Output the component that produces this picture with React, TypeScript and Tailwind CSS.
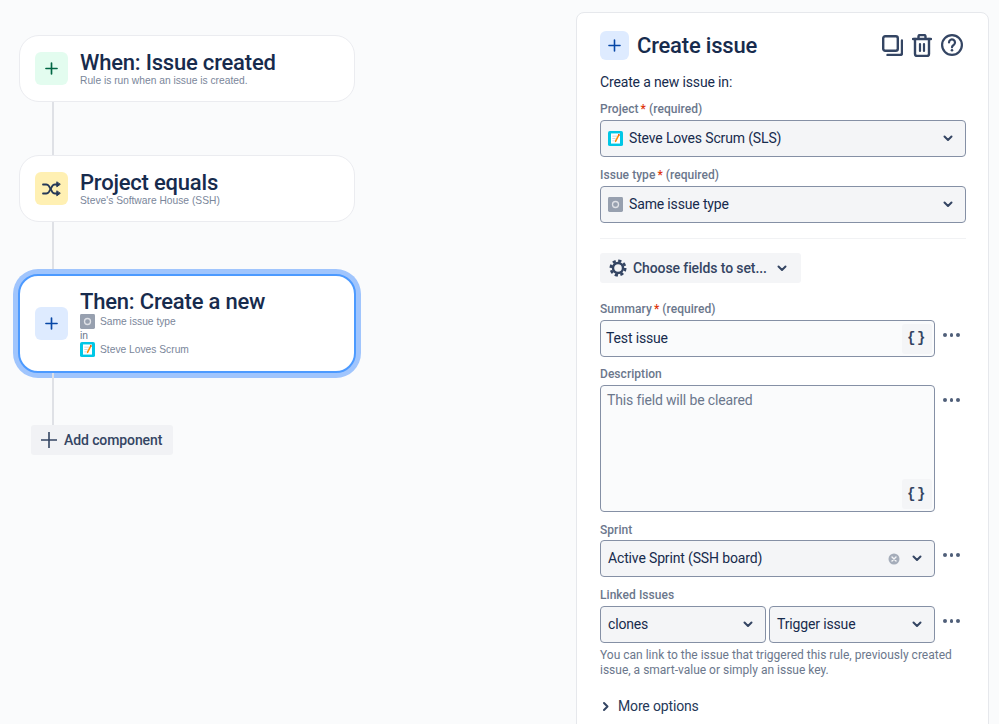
import { Plus } from "lucide-react"
import type { ReactNode } from "react"

function Chevron({ className = "" }: { className?: string }) {
  return (
    <svg width="10" height="7" viewBox="0 0 10 7" fill="none" className={className}>
      <path d="M1.5 1.5 5 5l3.5-3.5" stroke="#344563" strokeWidth="2" strokeLinecap="round" strokeLinejoin="round" />
    </svg>
  )
}

function NoteIcon({ size }: { size: number }) {
  return (
    <svg width={size} height={size} viewBox="0 0 16 16" className="shrink-0">
      <rect width="16" height="16" rx="2" fill="#00c7e6" />
      <rect x="3.2" y="2.6" width="9.6" height="10.8" fill="#fff" />
      <path d="M4.6 5.5h5M4.6 8h3.5M4.6 10.5h2.5" stroke="#c1c7d0" strokeWidth="0.8" />
      <path d="M11.2 3.2 12.6 4l-3.6 7-1.7 1.2.2-2z" fill="#ff8b00" />
      <path d="M11.2 3.2 12.6 4l-.5 1-1.4-.8z" fill="#de350b" />
    </svg>
  )
}

function TypeIcon({ size }: { size: number }) {
  return (
    <svg width={size} height={size} viewBox="0 0 16 16" className="shrink-0">
      <rect width="16" height="16" rx="1.5" fill="#97a0af" />
      <circle cx="8" cy="8" r="3.2" fill="none" stroke="#dfe1e6" strokeWidth="1.4" />
    </svg>
  )
}

function Card({ tile, title, children, selected = false }: { tile: ReactNode; title: string; children: ReactNode; selected?: boolean }) {
  return (
    <div
      className={
        selected
          ? "flex items-center w-[338px] h-[99px] -ml-px pl-[15px] bg-white rounded-[20px] border-2 border-[#4c9aff] shadow-[0_0_0_5px_#a0c5fd]"
          : "flex items-center w-[336px] h-[67px] pl-[15px] bg-white rounded-[20px] border border-[#ebecf0]"
      }
    >
      {tile}
      <div className="ml-[12px]">
        <div className="text-[22px] leading-[24px] font-medium tracking-[-0.2px] text-[#172b4d]">{title}</div>
        {children}
      </div>
    </div>
  )
}

function Tile({ bg, size = 33, children }: { bg: string; size?: number; children: ReactNode }) {
  return (
    <div className={`${bg} flex items-center justify-center rounded-[6px] shrink-0`} style={{ width: size, height: size }}>
      {children}
    </div>
  )
}

function Label({ text, required = false }: { text: string; required?: boolean }) {
  return (
    <div className="text-[12px] leading-[16px] font-medium tracking-[0.05px] text-[#6b778c]">
      {text}
      {required && <span className="text-[#de350b] ml-[2px]">*</span>}
      {required && <span> (required)</span>}
    </div>
  )
}

function Select({ children, className = "" }: { children: ReactNode; className?: string }) {
  return (
    <div className={`flex items-center h-[37px] bg-[#f4f5f7] border border-[#8590a5] rounded-[4px] text-[14px] tracking-[-0.15px] text-[#172b4d] ${className}`}>
      {children}
    </div>
  )
}

function Dots() {
  return (
    <div className="flex gap-[3px] w-[17px] ml-[8px] shrink-0 mt-[13px] self-start">
      <span className="w-[3.5px] h-[3.5px] rounded-full bg-[#505f79]" />
      <span className="w-[3.5px] h-[3.5px] rounded-full bg-[#505f79]" />
      <span className="w-[3.5px] h-[3.5px] rounded-full bg-[#505f79]" />
    </div>
  )
}

function Braces() {
  return (
    <div className="flex items-center justify-center w-[30px] h-[30px] rounded-[3px] bg-[#f4f5f7] text-[14px] font-bold tracking-[1.5px] text-[#344563] font-['Liberation_Mono',monospace]">
      {"{}"}
    </div>
  )
}

export default function App() {
  return (
    <div className="flex w-[999px] h-[724px] overflow-hidden bg-[#fafbfc] font-['Roboto',sans-serif] antialiased">
      <div className="w-[576px] pl-[19px] pt-[35px] shrink-0">
        <Card
          title="When: Issue created"
          tile={
            <Tile bg="bg-[#e3fcef]">
              <Plus size={19} strokeWidth={2.1} className="text-[#006644]" />
            </Tile>
          }
        >
          <div className="text-[10.25px] leading-[12px] text-[#7a869a] font-['Liberation_Sans',sans-serif]">Rule is run when an issue is created.</div>
        </Card>
        <div className="w-[2px] h-[53px] ml-[33px] bg-[#dfe1e6]" />
        <Card
          title="Project equals"
          tile={
            <Tile bg="bg-[#fff0b3]">
              <svg width="19" height="16" viewBox="0 0 19 16" fill="none" stroke="#253858" strokeWidth="1.8" strokeLinecap="round">
                <path d="M1 3.5h3.2c1.2 0 2 .5 2.7 1.5l3.4 6c.6 1 1.4 1.5 2.6 1.5h3" />
                <path d="M1 12.5h3.2c1.2 0 2-.5 2.7-1.5l3.4-6c.6-1 1.4-1.5 2.6-1.5h3" />
                <path d="M14.8 1.2v4.6L18 3.5zM14.8 10.2v4.6l3.2-2.3z" fill="#253858" strokeWidth="1" strokeLinejoin="round" />
              </svg>
            </Tile>
          }
        >
          <div className="text-[10.25px] leading-[12px] text-[#7a869a] font-['Liberation_Sans',sans-serif]">Steve's Software House (SSH)</div>
        </Card>
        <div className="w-[2px] h-[52px] ml-[33px] bg-[#dfe1e6]" />
        <Card
          selected
          title="Then: Create a new"
          tile={
            <Tile bg="bg-[#deebff]">
              <Plus size={19} strokeWidth={2.1} className="text-[#0747a6]" />
            </Tile>
          }
        >
          <div className="text-[10.25px] leading-[13px] text-[#7a869a] font-['Liberation_Sans',sans-serif]">
            <div className="flex items-center gap-[5px]">
              <TypeIcon size={15} />
              Same issue type
            </div>
            <div className="text-[#6b778c]">in</div>
            <div className="flex items-center gap-[5px]">
              <NoteIcon size={15} />
              Steve Loves Scrum
            </div>
          </div>
        </Card>
        <div className="w-[2px] h-[52px] ml-[33px] bg-[#dfe1e6]" />
        <button className="flex items-center w-[142px] h-[30px] ml-[12px] pl-[10px] rounded-[3px] bg-[#f1f2f5] text-[14px] font-medium tracking-[-0.1px] text-[#344563]">
          <svg width="16" height="16" viewBox="0 0 16 16" stroke="#344563" strokeWidth="1.6" className="mr-[7px]">
            <path d="M8 0v16M0 8h16" />
          </svg>
          Add component
        </button>
      </div>

      <div className="w-[413px] h-[760px] mt-[12px] bg-white border border-[#e6e8ec] rounded-[8px] pl-[23px] pt-[17px] shrink-0">
        <div className="flex items-center h-[30px] w-[366px]">
          <Tile bg="bg-[#deebff]" size={29}>
            <Plus size={19} strokeWidth={2} className="text-[#0747a6]" />
          </Tile>
          <div className="ml-[8px] text-[22px] font-medium tracking-[-0.2px] text-[#172b4d]">Create issue</div>
          <div className="flex items-center gap-[9px] ml-auto mr-[3px]">
            <svg width="21" height="21" viewBox="0 0 21 21" fill="none" stroke="#344563" strokeWidth="2.4">
              <rect x="1.2" y="1.2" width="14.6" height="14.6" rx="2" />
              <path d="M20 5.5V18a2 2 0 0 1-2 2H5.5" strokeLinecap="round" />
            </svg>
            <svg width="20" height="23" viewBox="0 0 20 23" fill="none" stroke="#344563" strokeWidth="2.4" strokeLinecap="round" strokeLinejoin="round">
              <path d="M1 5h18M6.5 5V2.5a1.5 1.5 0 0 1 1.5-1.5h4a1.5 1.5 0 0 1 1.5 1.5V5" />
              <path d="M3 5v15a2 2 0 0 0 2 2h10a2 2 0 0 0 2-2V5" />
              <path d="M8 10v7M12 10v7" strokeWidth="2.2" />
            </svg>
            <svg width="22" height="22" viewBox="0 0 22 22" fill="none" stroke="#344563" strokeWidth="2.2">
              <circle cx="11" cy="11" r="9.9" />
              <path d="M8 8.5a3 3 0 1 1 4.6 2.5c-1 .6-1.6 1.1-1.6 2.3" strokeLinecap="round" />
              <circle cx="11" cy="16.3" r="1.3" fill="#344563" stroke="none" />
            </svg>
          </div>
        </div>

        <div className="mt-[12px] text-[14px] leading-[20px] tracking-[-0.15px] text-[#172b4d]">Create a new issue in:</div>

        <div className="mt-[9px] w-[366px]">
          <Label text="Project" required />
          <Select className="mt-[3px] pl-[7px]">
            <NoteIcon size={15} />
            <span className="ml-[6px]">Steve Loves Scrum (SLS)</span>
            <Chevron className="ml-auto mr-[12px]" />
          </Select>
        </div>

        <div className="mt-[10px] w-[366px]">
          <Label text="Issue type" required />
          <Select className="mt-[3px] pl-[7px]">
            <TypeIcon size={15} />
            <span className="ml-[6px]">Same issue type</span>
            <Chevron className="ml-auto mr-[12px]" />
          </Select>
        </div>

        <div className="mt-[15px] w-[366px] h-px bg-[#f1f2f4]" />

        <button className="flex items-center w-[201px] h-[30px] mt-[14px] pl-[9px] rounded-[3px] bg-[#f4f5f7] text-[14px] font-medium tracking-[-0.1px] text-[#344563]">
          <svg width="18" height="18" viewBox="0 0 18 18" fill="none" stroke="#344563">
            <circle cx="9" cy="9" r="5" strokeWidth="2.4" />
            <circle cx="9" cy="9" r="7.2" strokeWidth="2.6" strokeDasharray="3.2 2.45" />
          </svg>
          <span className="ml-[6px]">Choose fields to set...</span>
          <Chevron className="ml-[10px]" />
        </button>

        <div className="mt-[18px]">
          <Label text="Summary" required />
          <div className="flex mt-[3px]">
            <div className="flex items-center w-[335px] h-[37px] pl-[5px] pr-[2px] bg-[#fafbfc] border border-[#8590a5] rounded-[4px] text-[14px] tracking-[-0.15px] text-[#172b4d]">
              Test issue
              <div className="ml-auto">
                <Braces />
              </div>
            </div>
            <Dots />
          </div>
        </div>

        <div className="mt-[9px]">
          <Label text="Description" />
          <div className="flex mt-[3px]">
            <div className="flex flex-col w-[335px] h-[127px] pl-[6px] pr-[2px] pt-[4px] pb-[2px] bg-[#fafbfc] border border-[#8590a5] rounded-[4px] text-[14px] tracking-[-0.15px] text-[#6b778c]">
              This field will be cleared
              <div className="mt-auto ml-auto">
                <Braces />
              </div>
            </div>
            <Dots />
          </div>
        </div>

        <div className="mt-[10px]">
          <Label text="Sprint" />
          <div className="flex mt-[2px]">
            <Select className="w-[335px] pl-[7px]">
              Active Sprint (SSH board)
              <svg width="12" height="12" viewBox="0 0 12 12" className="ml-auto">
                <circle cx="6" cy="6" r="5.5" fill="#a5adba" />
                <path d="M4 4l4 4M8 4l-4 4" stroke="#f4f5f7" strokeWidth="1.4" strokeLinecap="round" />
              </svg>
              <Chevron className="ml-[12px] mr-[12px]" />
            </Select>
            <Dots />
          </div>
        </div>

        <div className="mt-[10px]">
          <Label text="Linked Issues" />
          <div className="flex mt-[3px]">
            <Select className="w-[166px] pl-[7px]">
              clones
              <Chevron className="ml-auto mr-[12px]" />
            </Select>
            <Select className="w-[166px] ml-[3px] pl-[7px]">
              Trigger issue
              <Chevron className="ml-auto mr-[12px]" />
            </Select>
            <Dots />
          </div>
        </div>

        <div className="mt-[5px] w-[366px] text-[12px] leading-[15px] text-[#6b778c]">
          You can link to the issue that triggered this rule, previously created issue, a smart-value or simply an issue key.
        </div>

        <div className="flex items-center mt-[18px] text-[14px] tracking-[-0.15px] text-[#253858]">
          <Chevron className="-rotate-90 ml-[1px]" />
          <span className="ml-[7px]">More options</span>
        </div>
      </div>
    </div>
  )
}
